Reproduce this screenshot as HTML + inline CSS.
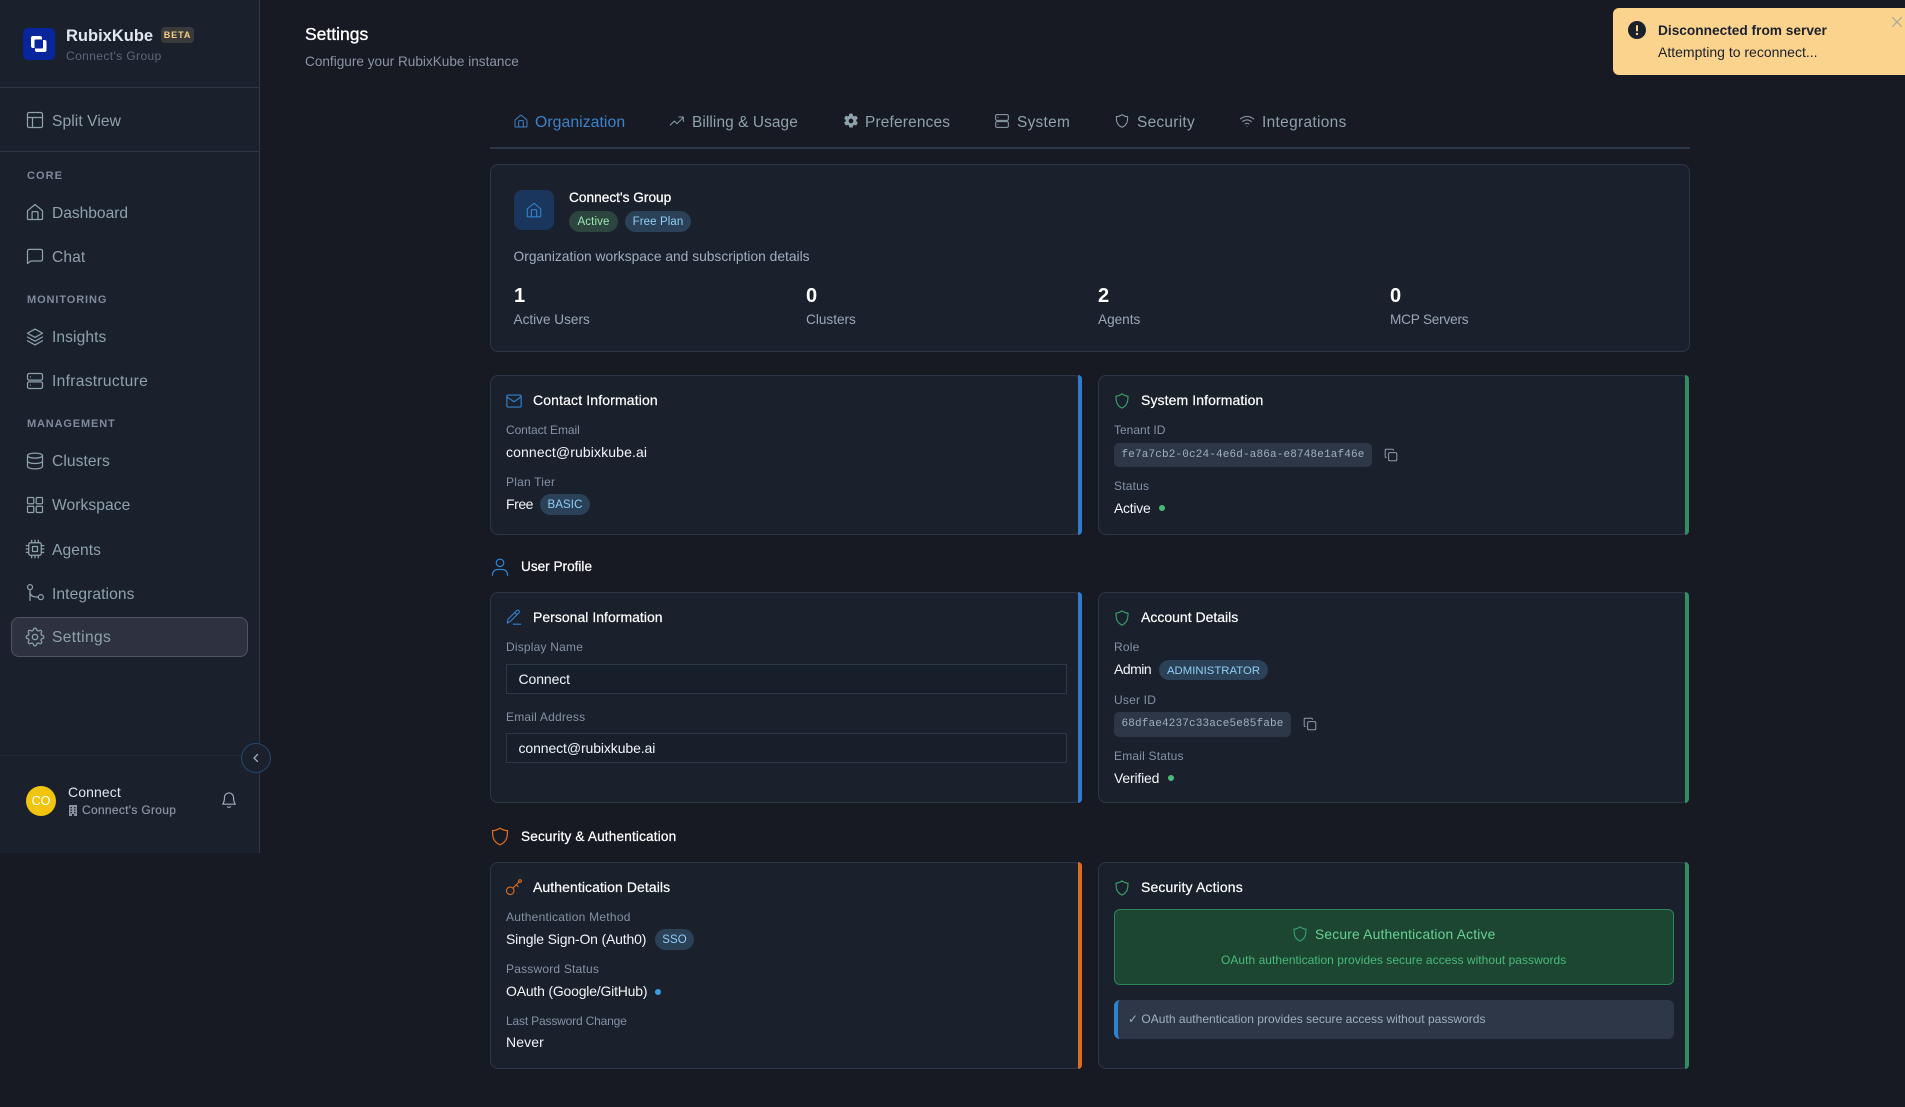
<!DOCTYPE html>
<html lang="en"><head><meta charset="utf-8"><title>Settings</title>
<style>
*{box-sizing:border-box}
html,body{margin:0;padding:0;width:1905px;height:1107px;overflow:hidden;background:#171923;font-family:"Liberation Sans",sans-serif}
.t{position:absolute;white-space:nowrap;line-height:20px;height:20px}
.b{position:absolute}
svg{position:absolute;fill:none;stroke-linecap:round;stroke-linejoin:round;stroke-width:1.5}
.nav{color:#8ea2ac;font-size:15.6px;left:52px;letter-spacing:.08px}
.sec{color:#7f8a9c;font-size:11px;left:27px;letter-spacing:1.05px;font-weight:bold}
.ni{stroke:#8ea2ac;left:25px;width:20px;height:20px}
.tab{color:#8ea2ac;font-size:15.4px;letter-spacing:.05px}
.ti{stroke:#8ea2ac;width:16px;height:16px}
.card{position:absolute;background:#1a202c;border:1px solid #2d3748;border-radius:8px}
.bar{position:absolute;top:-1px;bottom:-1px;right:-1px;width:4px;border-radius:0 8px 8px 0}
.h{color:#fff;font-size:14px;letter-spacing:.14px;-webkit-text-stroke:.2px #fff}
.l{color:#8492a6;font-size:12px;letter-spacing:.2px}
.v{color:#f2f5f8;font-size:14px;letter-spacing:.12px}
.bdg{position:absolute;background:#2a4158;color:#90cdf4;border-radius:11px;font-size:11.5px;text-align:center;letter-spacing:.1px;padding-top:1px}
.code{position:absolute;background:#2d3748;border-radius:5px;color:#a0aec0;font:11px "Liberation Mono",monospace;letter-spacing:.15px;line-height:24px;padding-left:7.5px;white-space:nowrap}
.dot{position:absolute;width:6px;height:6px;border-radius:50%}
.sl{color:#9aa7b8;font-size:13.6px}
.n{color:#fff;font-size:20px;font-weight:bold;line-height:20px}
.sh{color:#fff;font-size:13.6px;-webkit-text-stroke:.25px #fff}
input{position:absolute;background:#171f2b;border:1px solid #2d3748;color:#f2f5f8;font:14px "Liberation Sans",sans-serif;padding:0 0 0 11.5px;margin:0;outline:0;letter-spacing:-.1px}
</style></head><body>

<!-- Sidebar -->
<div class="b" style="left:0;top:0;width:260px;height:853px;background:#1a202c;border-right:1px solid #2d3748"></div>
<div class="b" style="left:0;top:87px;width:259px;height:1px;background:#2d3748"></div>
<div class="b" style="left:0;top:151px;width:259px;height:1px;background:#2d3748"></div>
<div class="b" style="left:0;top:755px;width:259px;height:1px;background:#232a38"></div>

<div class="b" style="left:23px;top:28px;width:32px;height:32px;background:#08269c;border-radius:5px"></div>
<svg style="left:23px;top:28px;stroke-width:0" width="32" height="32" viewBox="0 0 32 32"><rect x="8" y="8" width="11" height="12" rx="2" fill="#fff"/><rect x="12" y="12" width="11.500" height="12" rx="2" fill="#fff"/><rect x="11.500" y="11.500" width="8.500" height="9" rx="1" fill="#08269c"/></svg>
<span class="t" style="left:66px;top:26px;font-size:16.500px;font-weight:bold;color:#e2e8f0">RubixKube</span>
<div class="b" style="left:161px;top:27px;width:33px;height:16px;background:#3a3a3c;border-radius:4px;color:#f6cf85;font-size:9px;font-weight:bold;line-height:16px;text-align:center;letter-spacing:.9px">BETA</div>
<span class="t" style="left:66px;top:46px;font-size:12px;color:#5d6779;letter-spacing:.4px">Connect's Group</span>

<svg class="ni" style="top:110px" viewBox="0 0 24 24"><rect x="3" y="3" width="18" height="18" rx="2"/><path d="M3 9h18M9 9v12"/></svg>
<span class="t nav" style="top:112px">Split View</span>
<span class="t sec" style="top:166px">CORE</span>
<svg class="ni" style="top:202px" viewBox="0 0 24 24"><path d="M3 10.500 12 3l9 7.500V20a1 1 0 0 1-1 1H4a1 1 0 0 1-1-1z"/><path d="M8.500 21v-8.500a1 1 0 0 1 1-1h5a1 1 0 0 1 1 1V21"/></svg>
<span class="t nav" style="top:204px;letter-spacing:-.03px">Dashboard</span>
<svg class="ni" style="top:246px" viewBox="0 0 24 24"><path d="M3 21V6a2 2 0 0 1 2-2h14a2 2 0 0 1 2 2v10a2 2 0 0 1-2 2H7z"/></svg>
<span class="t nav" style="top:248px">Chat</span>
<span class="t sec" style="top:290px;letter-spacing:.9px">MONITORING</span>
<svg class="ni" style="top:327px" viewBox="0 0 24 24"><path d="M12 2.500 3 7.500l9 5 9-5zM3 12l9 5 9-5M3 16.500l9 5 9-5"/></svg>
<span class="t nav" style="top:328px">Insights</span>
<svg class="ni" style="top:371px" viewBox="0 0 24 24"><rect x="3" y="3" width="18" height="8" rx="2"/><rect x="3" y="13" width="18" height="8" rx="2"/><path d="M6.500 7h.01M6.500 17h.01"/></svg>
<span class="t nav" style="top:372px;letter-spacing:.3px">Infrastructure</span>
<span class="t sec" style="top:414px;letter-spacing:.85px">MANAGEMENT</span>
<svg class="ni" style="top:451px" viewBox="0 0 24 24"><ellipse cx="12" cy="5.500" rx="9" ry="3"/><path d="M3 5.500v13c0 1.700 4 3 9 3s9-1.300 9-3v-13M3 12c0 1.700 4 3 9 3s9-1.300 9-3"/></svg>
<span class="t nav" style="top:452px">Clusters</span>
<svg class="ni" style="top:495px" viewBox="0 0 24 24"><rect x="3" y="3" width="7.500" height="7.500" rx="1"/><rect x="13.500" y="3" width="7.500" height="7.500" rx="1"/><rect x="3" y="13.500" width="7.500" height="7.500" rx="1"/><rect x="13.500" y="13.500" width="7.500" height="7.500" rx="1"/></svg>
<span class="t nav" style="top:496px">Workspace</span>
<svg class="ni" style="top:539px" viewBox="0 0 24 24"><rect x="4.500" y="4.500" width="15" height="15" rx="2"/><rect x="9" y="9" width="6" height="6"/><path d="M8 1.500v3M12 1.500v3M16 1.500v3M8 19.500v3M12 19.500v3M16 19.500v3M1.500 8h3M1.500 12h3M1.500 16h3M19.500 8h3M19.500 12h3M19.500 16h3"/></svg>
<span class="t nav" style="top:541px">Agents</span>
<svg class="ni" style="top:583px" viewBox="0 0 24 24"><circle cx="6" cy="5" r="3"/><circle cx="19" cy="17" r="3"/><path d="M6 8v13M6 11c0 4 3 6 10 6"/></svg>
<span class="t nav" style="top:585px">Integrations</span>
<div class="b" style="left:11px;top:617px;width:237px;height:40px;background:#2d3140;border:1px solid #4f5565;border-radius:8px"></div>
<svg class="ni" style="top:627px" viewBox="0 0 24 24"><circle cx="12" cy="12" r="3.200"/><path d="M10.300 3.300a1.800 1.800 0 0 1 3.400 0l.4 1a1.800 1.800 0 0 0 2.400 1l1-.5a1.800 1.800 0 0 1 2.400 2.400l-.5 1a1.800 1.800 0 0 0 1 2.400l1 .4a1.800 1.800 0 0 1 0 3.400l-1 .4a1.800 1.800 0 0 0-1 2.400l.5 1a1.800 1.800 0 0 1-2.400 2.400l-1-.5a1.800 1.800 0 0 0-2.400 1l-.4 1a1.800 1.800 0 0 1-3.400 0l-.4-1a1.800 1.800 0 0 0-2.400-1l-1 .5a1.800 1.800 0 0 1-2.400-2.400l.5-1a1.800 1.800 0 0 0-1-2.400l-1-.4a1.800 1.800 0 0 1 0-3.400l1-.4a1.800 1.800 0 0 0 1-2.400l-.5-1a1.800 1.800 0 0 1 2.400-2.400l1 .5a1.800 1.800 0 0 0 2.400-1z" transform="translate(0 -.7)"/></svg>
<span class="t nav" style="top:628px;letter-spacing:.35px">Settings</span>

<div class="b" style="left:241px;top:743px;width:30px;height:30px;border-radius:50%;background:#1a202c;border:1px solid #25476b"></div>
<svg style="left:250px;top:752px;stroke:#a0aec0;stroke-width:1.300" width="12" height="12" viewBox="0 0 12 12"><path d="M7.500 2.500 4 6l3.500 3.500"/></svg>

<div class="b" style="left:26px;top:786px;width:30px;height:30px;border-radius:50%;background:#f1c40f;color:#fff;font-size:12.500px;line-height:30px;text-align:center">CO</div>
<span class="t" style="left:68px;top:782px;font-size:14px;color:#e2e8f0;letter-spacing:.1px">Connect</span>
<svg style="left:68px;top:805px;stroke:none" width="10" height="11" viewBox="0 0 10 11"><path fill="#8a94a3" d="M1 0h8v11H6V9H4v2H1zM2.500 2v1.200h1.500V2zM6 2v1.200h1.500V2zM2.500 4.500v1.200h1.500V4.500zM6 4.500v1.200h1.500V4.500zM2.500 7v1.200h1.500V7zM6 7v1.200h1.500V7z"/></svg>
<span class="t" style="left:82px;top:800px;font-size:12px;color:#8a94a3;letter-spacing:.3px;-webkit-text-stroke:.2px #8a94a3">Connect's Group</span>
<svg style="left:220px;top:791px;stroke:#a0aec0" width="18" height="18" viewBox="0 0 24 24"><path d="M18 8.500a6 6 0 0 0-12 0c0 6.500-2.500 9-2.500 9h17S18 15 18 8.500zM10 21c.5 1 3.500 1 4 0"/></svg>

<!-- Header -->
<span class="t" style="left:305px;top:24px;font-size:17.500px;color:#fff;-webkit-text-stroke:.35px #fff">Settings</span>
<span class="t" style="left:305px;top:52px;font-size:13.600px;color:#8a94a6">Configure your RubixKube instance</span>

<!-- Tabs -->
<svg class="ti" style="left:513px;top:113px;stroke:#3b83c9" viewBox="0 0 24 24"><path d="M3 10.500 12 3l9 7.500V20a1 1 0 0 1-1 1H4a1 1 0 0 1-1-1z"/><path d="M8.500 21v-8.500a1 1 0 0 1 1-1h5a1 1 0 0 1 1 1V21"/></svg>
<span class="t tab" style="left:535px;top:113px;color:#3b83c9;font-size:15.800px">Organization</span>
<svg class="ti" style="left:669px;top:113px" viewBox="0 0 24 24"><path d="M2 18l6-6 4 4 9-9M15 6h6.500v6.500"/></svg>
<span class="t tab" style="left:692px;top:113px;letter-spacing:.1px">Billing &amp; Usage</span>
<svg class="ti" style="left:843px;top:113px;stroke:none" viewBox="0 0 24 24"><path fill="#8ea2ac" fill-rule="evenodd" d="M14.500 1h-5l-.6 3.100-1.700.9-3-1-2.500 4.300 2.400 2.100v2l-2.400 2.100 2.500 4.300 3-1 1.700.9.600 3.100h5l.6-3.100 1.700-.9 3 1 2.500-4.300-2.400-2.100v-2l2.400-2.100-2.500-4.300-3 1-1.700-.9zM12 8.500a3.500 3.500 0 1 1 0 7 3.500 3.500 0 0 1 0-7z"/></svg>
<span class="t tab" style="left:865px;top:113px;letter-spacing:.2px">Preferences</span>
<svg class="ti" style="left:994px;top:113px" viewBox="0 0 24 24"><rect x="2.500" y="2.500" width="19" height="8.500" rx="2"/><rect x="2.500" y="13" width="19" height="8.500" rx="2"/><path d="M6 6.700h.01M6 17.200h.01"/></svg>
<span class="t tab" style="left:1017px;top:113px;letter-spacing:.3px">System</span>
<svg class="ti" style="left:1114px;top:113px" viewBox="0 0 24 24"><path d="M12 2.500c3 2 6 3 8.500 3 0 7.500-1 12.500-8.500 16-7.500-3.500-8.500-8.500-8.500-16 2.500 0 5.500-1 8.500-3z"/></svg>
<span class="t tab" style="left:1137px;top:113px;letter-spacing:.3px">Security</span>
<svg class="ti" style="left:1239px;top:113px" viewBox="0 0 24 24"><path d="M2 9c6-5 14-5 20 0M5.500 13c4-3.500 9-3.500 13 0M9 16.500c2-1.500 4-1.500 6 0M12 20h.01"/></svg>
<span class="t tab" style="left:1262px;top:113px;letter-spacing:.35px">Integrations</span>
<div class="b" style="left:490px;top:147px;width:1200px;height:2px;background:#2d3748"></div>

<!-- Org card -->
<div class="card" style="left:490px;top:164px;width:1200px;height:188px"></div>
<div class="b" style="left:514px;top:190px;width:40px;height:40px;border-radius:8px;background:#1a365d"></div>
<svg style="left:525px;top:201px;stroke:#3182ce" width="18" height="18" viewBox="0 0 24 24"><path d="M3 10.500 12 3l9 7.500V20a1 1 0 0 1-1 1H4a1 1 0 0 1-1-1z"/><path d="M8.500 21v-8.500a1 1 0 0 1 1-1h5a1 1 0 0 1 1 1V21"/></svg>
<span class="t sh" style="left:569px;top:188px;font-size:13.700px">Connect's Group</span>
<div class="bdg" style="left:569px;top:211px;width:49px;height:21px;background:#2c453f;color:#9ae6b4;line-height:21px">Active</div>
<div class="bdg" style="left:625px;top:211px;width:66px;height:21px;line-height:21px">Free Plan</div>
<span class="t" style="left:513.500px;top:247px;font-size:13.800px;color:#a0aec0">Organization workspace and subscription details</span>
<span class="t n" style="left:514px;top:286px">1</span><span class="t sl" style="left:513.500px;top:310px">Active Users</span>
<span class="t n" style="left:806px;top:286px">0</span><span class="t sl" style="left:806px;top:310px">Clusters</span>
<span class="t n" style="left:1098px;top:286px">2</span><span class="t sl" style="left:1098px;top:310px">Agents</span>
<span class="t n" style="left:1390px;top:286px">0</span><span class="t sl" style="left:1390px;top:310px;letter-spacing:-.2px">MCP Servers</span>

<!-- Contact -->
<div class="card" style="left:490px;top:375px;width:592px;height:160px"><div class="bar" style="background:#2f7ccf"></div></div>
<svg style="left:505px;top:392px;stroke:#3182ce" width="18" height="18" viewBox="0 0 24 24"><rect x="2.500" y="4" width="19" height="16" rx="1.500"/><path d="M2.500 6.500 12 13l9.500-6.500"/></svg>
<span class="t h" style="left:533px;top:390px">Contact Information</span>
<span class="t l" style="left:506px;top:420px;letter-spacing:-.08px">Contact Email</span>
<span class="t v" style="left:506px;top:442px">connect@rubixkube.ai</span>
<span class="t l" style="left:506px;top:472px">Plan Tier</span>
<span class="t v" style="left:506px;top:494px;letter-spacing:-.45px">Free</span>
<div class="bdg" style="left:540px;top:494px;width:50px;height:21px;line-height:21px">BASIC</div>

<!-- System info -->
<div class="card" style="left:1098px;top:375px;width:591px;height:160px"><div class="bar" style="background:#2f8f63"></div></div>
<svg style="left:1113px;top:392px;stroke:#38a169" width="18" height="18" viewBox="0 0 24 24"><path d="M12 2.500c3 2 6 3 8 3 0 7.500-1 12.500-8 16-7-3.500-8-8.500-8-16 2 0 5-1 8-3z"/></svg>
<span class="t h" style="left:1141px;top:390px;letter-spacing:.1px">System Information</span>
<span class="t l" style="left:1114px;top:420px;letter-spacing:0">Tenant ID</span>
<div class="code" style="left:1114px;top:443px;width:258px;height:24px">fe7a7cb2-0c24-4e6d-a86a-e8748e1af46e</div>
<svg style="left:1384px;top:448px;stroke:#a0aec0" width="14" height="14" viewBox="0 0 24 24"><rect x="8" y="8" width="14" height="14" rx="2"/><path d="M16 4V3.500A1.500 1.500 0 0 0 14.500 2h-11A1.500 1.500 0 0 0 2 3.500v11A1.500 1.500 0 0 0 3.500 16H4"/></svg>
<span class="t l" style="left:1114px;top:476px">Status</span>
<span class="t v" style="left:1114px;top:498px;letter-spacing:-.28px">Active</span>
<div class="dot" style="left:1159px;top:505px;background:#48bb78"></div>

<!-- User profile -->
<svg style="left:490px;top:557px;stroke:#3182ce" width="20" height="20" viewBox="0 0 24 24"><circle cx="12" cy="7" r="4.500"/><path d="M3 22v-1a6 6 0 0 1 6-6h6a6 6 0 0 1 6 6v1"/></svg>
<span class="t sh" style="left:521px;top:557px;font-size:13.600px">User Profile</span>

<div class="card" style="left:490px;top:592px;width:592px;height:211px"><div class="bar" style="background:#2f7ccf"></div></div>
<svg style="left:505px;top:608px;stroke:#3182ce" width="18" height="18" viewBox="0 0 24 24"><path d="M3 20l1-5L15.500 3.500a2.100 2.100 0 0 1 3 3L7 18zM13 6l3 3M11 21.500h10"/></svg>
<span class="t h" style="left:533px;top:607px;letter-spacing:.02px">Personal Information</span>
<span class="t l" style="left:506px;top:637px">Display Name</span>
<input value="Connect" style="left:506px;top:664px;width:561px;height:30px">
<span class="t l" style="left:506px;top:707px">Email Address</span>
<input value="connect@rubixkube.ai" style="left:506px;top:733px;width:561px;height:30px">

<div class="card" style="left:1098px;top:592px;width:591px;height:211px"><div class="bar" style="background:#2f8f63"></div></div>
<svg style="left:1113px;top:609px;stroke:#38a169" width="18" height="18" viewBox="0 0 24 24"><path d="M12 2.500c3 2 6 3 8 3 0 7.500-1 12.500-8 16-7-3.500-8-8.500-8-16 2 0 5-1 8-3z"/></svg>
<span class="t h" style="left:1141px;top:607px;letter-spacing:0">Account Details</span>
<span class="t l" style="left:1114px;top:637px">Role</span>
<span class="t v" style="left:1114px;top:659px;letter-spacing:-.5px">Admin</span>
<div class="bdg" style="left:1159px;top:660px;width:109px;height:20px;line-height:20px;font-size:11.300px;letter-spacing:.05px">ADMINISTRATOR</div>
<span class="t l" style="left:1114px;top:690px">User ID</span>
<div class="code" style="left:1114px;top:712px;width:177px;height:25px;line-height:25px">68dfae4237c33ace5e85fabe</div>
<svg style="left:1303px;top:717px;stroke:#a0aec0" width="14" height="14" viewBox="0 0 24 24"><rect x="8" y="8" width="14" height="14" rx="2"/><path d="M16 4V3.500A1.500 1.500 0 0 0 14.500 2h-11A1.500 1.500 0 0 0 2 3.500v11A1.500 1.500 0 0 0 3.500 16H4"/></svg>
<span class="t l" style="left:1114px;top:746px">Email Status</span>
<span class="t v" style="left:1114px;top:768px;letter-spacing:-.18px">Verified</span>
<div class="dot" style="left:1168px;top:775px;background:#48bb78"></div>

<!-- Security -->
<svg style="left:490px;top:826px;stroke:#dd6b20" width="20" height="21" viewBox="0 0 24 24"><path d="M12 2c3 2 6 3 9 3 0 8-1 13.500-9 17-8-3.500-9-9-9-17 3 0 6-1 9-3z"/></svg>
<span class="t sh" style="left:521px;top:827px;font-size:13.600px;letter-spacing:.17px">Security &amp; Authentication</span>

<div class="card" style="left:490px;top:862px;width:592px;height:207px"><div class="bar" style="background:#dd6b20"></div></div>
<svg style="left:505px;top:878px;stroke:#dd6b20" width="18" height="18" viewBox="0 0 24 24"><circle cx="7" cy="17" r="5"/><path d="M10.500 13.500 19 5M15 9l2.500 2.500"/><circle cx="20" cy="4" r="1.800"/></svg>
<span class="t h" style="left:533px;top:877px;letter-spacing:.08px">Authentication Details</span>
<span class="t l" style="left:506px;top:907px;letter-spacing:.25px">Authentication Method</span>
<span class="t v" style="left:506px;top:929px;letter-spacing:-.17px">Single Sign-On (Auth0)</span>
<div class="bdg" style="left:655px;top:929px;width:39px;height:21px;line-height:21px">SSO</div>
<span class="t l" style="left:506px;top:959px">Password Status</span>
<span class="t v" style="left:506px;top:981px;letter-spacing:-.2px">OAuth (Google/GitHub)</span>
<div class="dot" style="left:655px;top:989px;background:#4299e1"></div>
<span class="t l" style="left:506px;top:1011px;letter-spacing:-.17px">Last Password Change</span>
<span class="t v" style="left:506px;top:1032px;letter-spacing:.1px">Never</span>

<div class="card" style="left:1098px;top:862px;width:591px;height:207px"><div class="bar" style="background:#2f8f63"></div></div>
<svg style="left:1113px;top:879px;stroke:#38a169" width="18" height="18" viewBox="0 0 24 24"><path d="M12 2.500c3 2 6 3 8 3 0 7.500-1 12.500-8 16-7-3.500-8-8.500-8-16 2 0 5-1 8-3z"/></svg>
<span class="t h" style="left:1141px;top:877px">Security Actions</span>
<div class="b" style="left:1114px;top:909px;width:560px;height:76px;background:#1c4532;border:1px solid #2f855a;border-radius:6px"></div>
<svg style="left:1291px;top:925px;stroke:#38a169" width="18" height="18" viewBox="0 0 24 24"><path d="M12 2.500c3 2 6 3 8 3 0 7.500-1 12.500-8 16-7-3.500-8-8.500-8-16 2 0 5-1 8-3z"/></svg>
<span class="t" style="left:1315px;top:925px;font-size:13.800px;color:#68d391;letter-spacing:.2px">Secure Authentication Active</span>
<span class="t" style="left:1221px;top:950px;font-size:12px;color:#48bb78;letter-spacing:.04px">OAuth authentication provides secure access without passwords</span>
<div class="b" style="left:1114px;top:1000px;width:560px;height:39px;background:#2d3748;border-left:4px solid #3182ce;border-radius:6px"></div>
<span class="t" style="left:1128px;top:1009px;font-size:12px;color:#a0aec0;letter-spacing:.02px">✓ OAuth authentication provides secure access without passwords</span>

<!-- Toast -->
<div class="b" style="left:1613px;top:8px;width:292px;height:67px;background:#fbd38d;border-radius:6px 0 0 6px"></div>
<svg style="left:1628px;top:21px;stroke:none" width="18" height="18" viewBox="0 0 18 18"><circle cx="9" cy="9" r="9" fill="#1a202c"/><rect x="8" y="4" width="2" height="6.500" rx="1" fill="#fbd38d"/><circle cx="9" cy="13" r="1.200" fill="#fbd38d"/></svg>
<span class="t" style="left:1658px;top:21px;font-size:13.700px;font-weight:bold;color:#1a202c">Disconnected from server</span>
<span class="t" style="left:1658px;top:42px;font-size:14px;color:#1a202c">Attempting to reconnect...</span>
<svg style="left:1892px;top:17px;stroke:#a6a89a;stroke-width:1.200" width="10" height="10" viewBox="0 0 10 10"><path d="M.5.500l9 9M9.500.500l-9 9"/></svg>
</body></html>
